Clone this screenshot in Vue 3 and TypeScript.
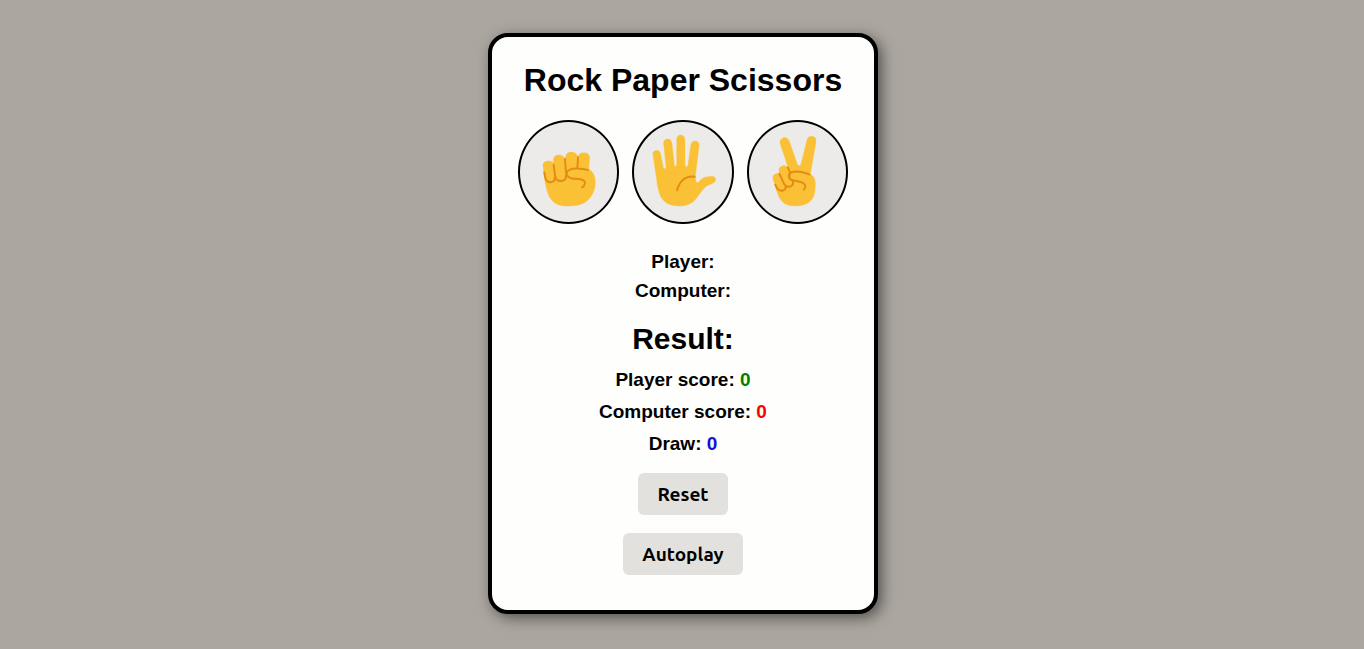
<script setup lang="ts">
import { computed, onBeforeUnmount, ref } from 'vue'

type Move = 'Rock' | 'Paper' | 'Scissors'

const moves: Move[] = ['Rock', 'Paper', 'Scissors']
const beats: Record<Move, Move> = { Rock: 'Scissors', Paper: 'Rock', Scissors: 'Paper' }

const player = ref('')
const computer = ref('')
const result = ref('')
const wins = ref(0)
const losses = ref(0)
const draws = ref(0)
const timer = ref<number | undefined>(undefined)

const scores = computed(() => [
  { label: 'Player score:', value: wins.value, tone: 'win' },
  { label: 'Computer score:', value: losses.value, tone: 'loss' },
  { label: 'Draw:', value: draws.value, tone: 'draw' },
])

function randomMove(): Move {
  return moves[Math.floor(Math.random() * moves.length)]
}

function play(move: Move) {
  const other = randomMove()
  player.value = move
  computer.value = other
  if (move === other) {
    draws.value++
    result.value = 'Draw'
  } else if (beats[move] === other) {
    wins.value++
    result.value = 'Win'
  } else {
    losses.value++
    result.value = 'Lose'
  }
}

function stop() {
  window.clearInterval(timer.value)
  timer.value = undefined
}

function toggleAutoplay() {
  if (timer.value !== undefined) stop()
  else timer.value = window.setInterval(() => play(randomMove()), 1000)
}

function reset() {
  stop()
  player.value = computer.value = result.value = ''
  wins.value = losses.value = draws.value = 0
}

onBeforeUnmount(stop)
</script>

<template>
  <main class="page">
    <section class="card">
      <h1>Rock Paper Scissors</h1>

      <div class="moves">
        <button v-for="move in moves" :key="move" class="move" type="button" :aria-label="move" @click="play(move)">
          <svg v-if="move === 'Rock'" viewBox="30 30 292 300" aria-hidden="true">
            <path class="skin" d="M99 162C98 152 105 147 115 147C124 146 129 150 131 155L130 145C130 134 137 129 146 129C157 129 162 135 165 141L166 137C167 126 174 120 184 120C195 120 201 126 204 135C205 126 213 122 222 122C233 122 239 128 239 138L236 171C249 178 256 192 256 211C256 231 249 249 236 262C223 276 205 282 182 282H170C147 282 130 274 120 257C112 243 106 221 103 194Z" />
            <path class="line" d="M103 181L106 198C109 208 117 212 125 210C131 209 135 204 134 197M131 158L135 190C137 202 145 208 155 207C165 206 169 199 168 190M165 141L168 183M204 136L202 168M234 174C212 167 181 167 172 178C165 188 175 199 190 200C208 201 221 201 224 209C227 216 221 224 216 226" />
          </svg>
          <svg v-else-if="move === 'Paper'" viewBox="31 30 292 300" aria-hidden="true">
            <path class="skin" d="M88 130C86 121 91 116 98 115C106 115 110 120 111 126L119 166C120 172 127 171 127 165L120 96C119 87 124 81 132 81C140 81 144 87 145 95L152 158C153 164 159 164 159 157V84C159 75 163 69 171 69C179 69 184 75 184 84V159C185 166 192 166 193 159L201 101C202 91 208 86 216 87C224 88 227 94 226 103L216 185C214 201 216 210 222 213C229 205 238 197 247 195L265 193C272 193 277 198 276 204C276 210 270 213 264 215C250 219 242 227 235 236L217 260C206 275 187 282 166 282C135 282 116 269 108 246C102 231 100 215 98 196Z" />
            <path class="line" d="M213 194C184 191 168 207 160 235" />
          </svg>
          <svg v-else viewBox="33 30 292 300" aria-hidden="true">
            <path class="skin" d="M127 97C124 87 129 79 137 77C145 76 151 80 154 88L178 157C180 162 187 162 189 156L207 83C209 75 216 71 224 73C232 75 235 81 234 90L217 186C227 192 232 201 232 215C232 239 229 257 216 268C206 278 190 282 175 282C151 282 136 276 126 260C119 249 116 237 112 223L105 201C103 191 108 186 115 185C120 184 123 186 125 189L123 175C122 167 127 163 134 161C142 160 149 164 151 170L155 180Z" />
            <path class="line" d="M112 218L116 227C121 235 130 238 136 235C143 232 145 227 142 220M124 185L136 211C141 222 149 226 158 223C165 220 167 214 164 208M149 166L156 181M215 188C198 181 177 176 163 180C151 183 149 195 158 202C169 209 190 207 198 215C205 221 202 229 197 233M155 184L154 199L165 207" />
          </svg>
        </button>
      </div>

      <div class="choices">
        <p>Player: {{ player }}</p>
        <p>Computer: {{ computer }}</p>
      </div>

      <h2>Result: {{ result }}</h2>

      <div class="scores">
        <p v-for="score in scores" :key="score.label">
          {{ score.label }} <span :class="score.tone">{{ score.value }}</span>
        </p>
      </div>

      <div class="actions">
        <button class="action" type="button" @click="reset">Reset</button>
        <button class="action" type="button" @click="toggleAutoplay">Autoplay</button>
      </div>
    </section>
  </main>
</template>

<style>
body {
  background: #aba69f;
}
</style>

<style scoped>
.page {
  box-sizing: border-box;
  min-height: 100vh;
  display: flex;
  align-items: center;
  justify-content: center;
  padding: 14px 16px 16px 18px;
  font-family: "Liberation Sans", Arial, sans-serif;
  font-weight: bold;
  color: #000;
}
.card {
  box-sizing: border-box;
  width: 100%;
  max-width: 390px;
  padding: 24px 26px 35px;
  border: 4px solid #000;
  border-radius: 20px;
  background: #fefefc;
  box-shadow: 4px 4px 14px rgba(0, 0, 0, 0.5);
  text-align: center;
}
h1,
h2,
p {
  margin: 0;
}
h1 {
  font-size: 32px;
  line-height: 38px;
}
.moves {
  display: grid;
  grid-template-columns: repeat(3, 1fr);
  gap: 13px;
  margin-top: 21px;
}
.move {
  height: 104px;
  padding: 0;
  border: 2px solid #000;
  border-radius: 50%;
  background: #ecebea;
  cursor: pointer;
}
.move svg {
  display: block;
  width: 100%;
  height: 100%;
}
.skin {
  fill: #fbc136;
  stroke: #fbc136;
  stroke-width: 1;
}
.line {
  fill: none;
  stroke: #e48c15;
  stroke-width: 6;
  stroke-linecap: round;
  stroke-linejoin: round;
}
.choices {
  margin-top: 23px;
  font-size: 19px;
  line-height: 29px;
}
h2 {
  margin-top: 16px;
  font-size: 30px;
  line-height: 36px;
}
.scores {
  margin-top: 7px;
  font-size: 19px;
  line-height: 32px;
}
.win {
  color: #008000;
}
.loss {
  color: #f00;
}
.draw {
  color: #1313d4;
}
.actions {
  display: flex;
  flex-direction: column;
  align-items: center;
  gap: 18px;
  margin-top: 13px;
}
.action {
  padding: 8px 19px;
  border: 0;
  border-radius: 6px;
  background: #e3e1de;
  color: #000;
  font-family: Ubuntu, "Noto Sans", sans-serif;
  font-size: 19px;
  font-weight: 600;
  line-height: 26px;
  cursor: pointer;
}
</style>
